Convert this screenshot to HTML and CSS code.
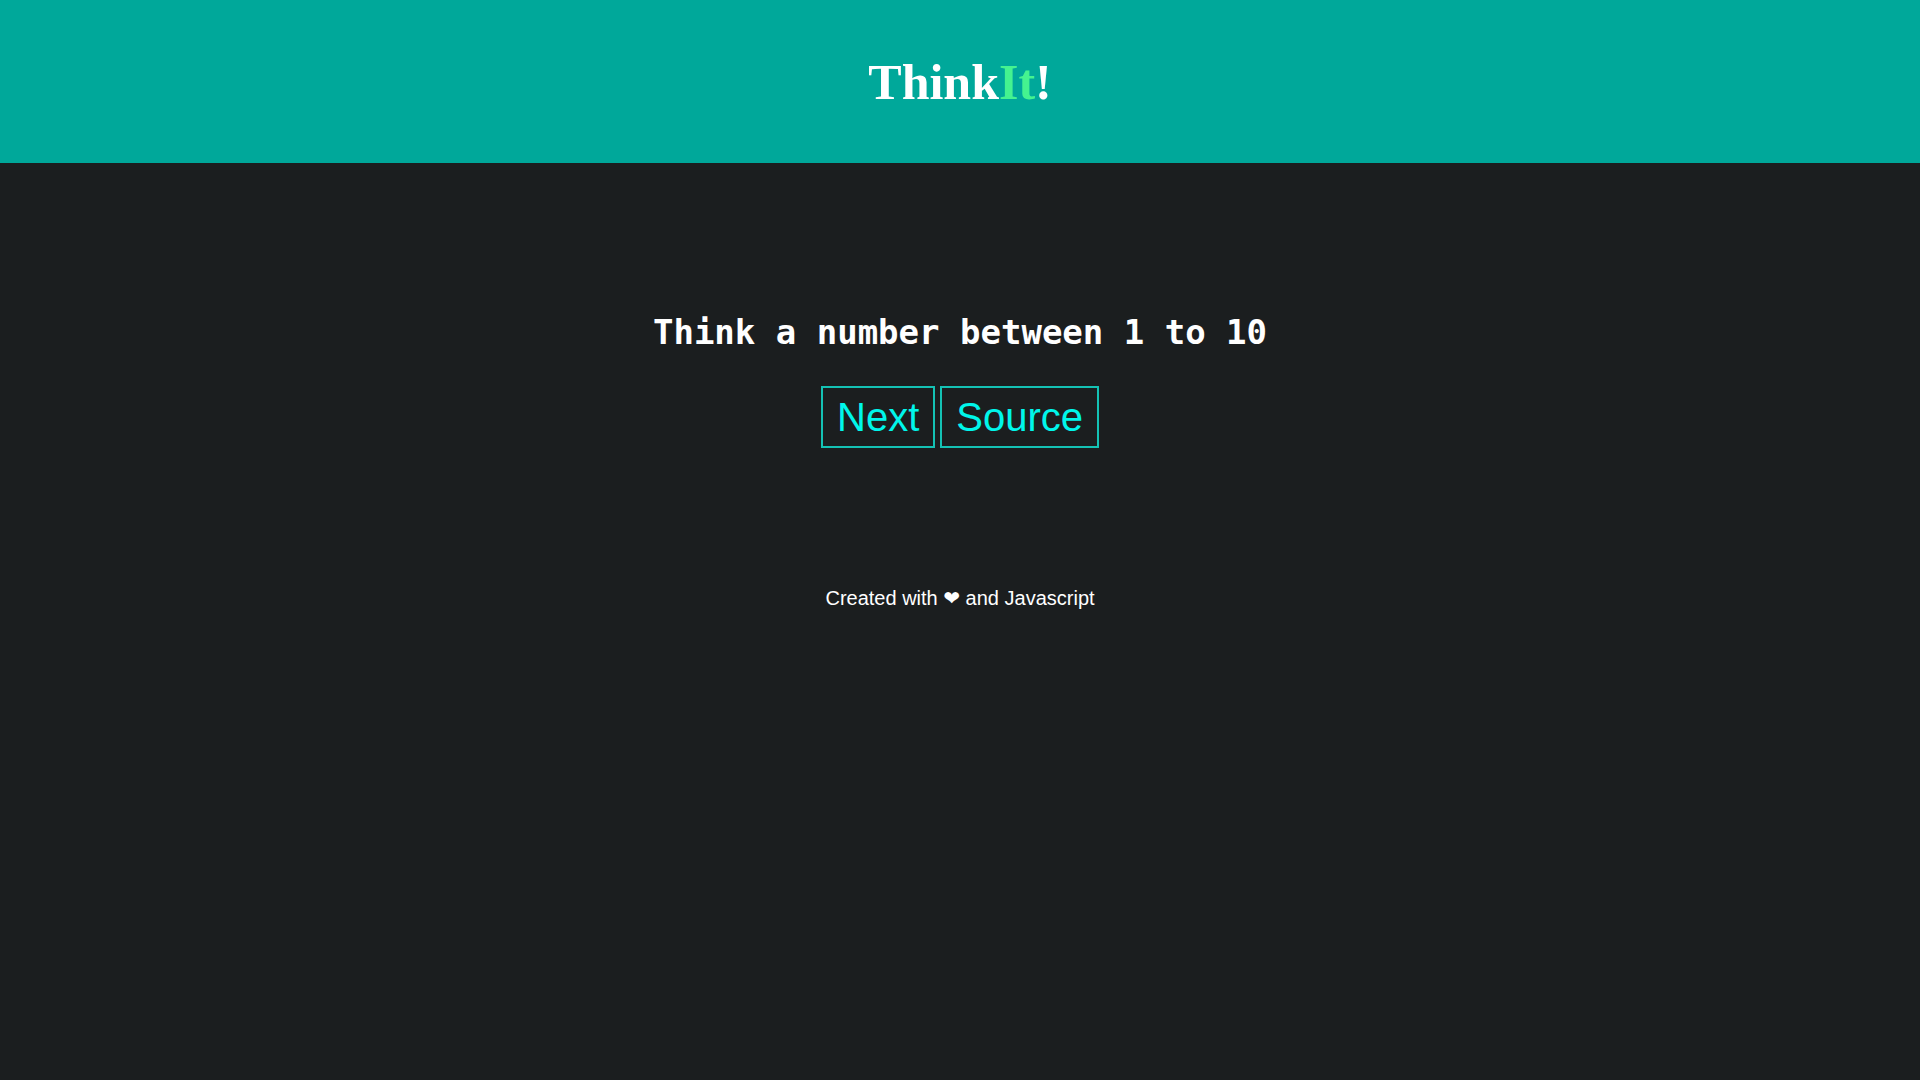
FILE: index.html
```html
<!DOCTYPE html>
<html>
<head>
<meta charset="utf-8">
<title>ThinkIt!</title>
<link rel="stylesheet" href="styles.css">
</head>
<body>
<header class="header">
  <h1 class="logo">Think<span class="logo-accent">It</span>!</h1>
</header>
<main class="main">
  <h2 class="prompt">Think a number between 1 to 10</h2>
  <div class="actions">
    <button class="btn">Next</button>
    <button class="btn">Source</button>
  </div>
  <p class="footer">Created with <span class="heart">❤</span> and Javascript</p>
</main>
</body>
</html>
```
FILE: styles.css
```css
html, body {
  margin: 0;
  padding: 0;
}
body {
  background: #1b1e1f;
  color: #ffffff;
  font-family: "Liberation Sans", Arial, sans-serif;
  min-height: 1080px;
}
.header {
  background: #00a89a;
  height: 163px;
  box-sizing: border-box;
  padding-top: 54px;
  text-align: center;
}
.logo {
  margin: 0;
  font-family: "Liberation Serif", "Times New Roman", serif;
  font-weight: bold;
  font-size: 50px;
  line-height: 1.15;
  color: #ffffff;
}
.logo-accent {
  color: #45f390;
}
.main {
  display: flex;
  flex-direction: column;
  align-items: center;
}
.prompt {
  margin: 149px 0 0;
  font-family: "DejaVu Sans Mono", monospace;
  font-weight: bold;
  font-size: 34px;
  line-height: 40px;
  color: #ffffff;
}
.actions {
  display: flex;
  gap: 5px;
  margin-top: 34px;
}
.btn {
  background: transparent;
  border: 2px solid #14c2b4;
  color: #00f6ea;
  font-family: "Liberation Sans", Arial, sans-serif;
  font-size: 40px;
  line-height: 46px;
  padding: 6px 14px;
  margin: 0;
  cursor: pointer;
}
.footer {
  margin: 139px 0 0;
  font-size: 20px;
  line-height: 23px;
  color: #ffffff;
}
.heart {
  font-family: "DejaVu Sans", sans-serif;
}
```
